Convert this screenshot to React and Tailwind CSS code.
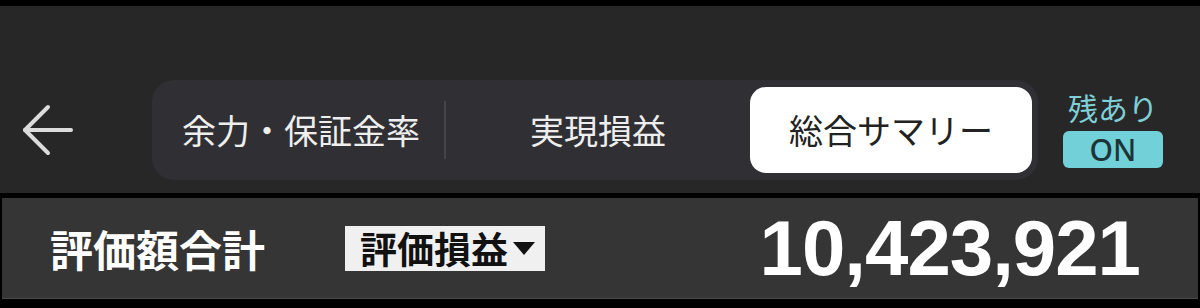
import React from "react";

const jp = { fontFamily: '"Noto Sans CJK JP", "Noto Sans", sans-serif' };
const num = { fontFamily: '"Liberation Sans", Arial, sans-serif' };

export default function App() {
  return (
    <div className="w-[1200px] h-[308px] bg-black pt-[6px] flex flex-col overflow-hidden" style={jp}>
      <div className="h-[187px] bg-[#272728] flex items-start pt-[74px] shrink-0">
        <div className="w-[152px] h-[100px] flex items-center pl-[22px]">
          <svg width="52" height="52" viewBox="0 0 52 52" fill="none" stroke="#dcdcdc" strokeWidth="4" strokeLinecap="round" strokeLinejoin="round">
            <path d="M3 26 H49" />
            <path d="M26 3 L3 26 L26 49" />
          </svg>
        </div>
        <div className="w-[886px] h-[100px] rounded-[22px] bg-[#303034] flex items-center pl-[6px] pr-[6px]">
          <div className="w-[286px] h-[86px] flex items-center justify-center text-[34px] text-[#eeeeee] pb-[2px]">
            余力・保証金率
          </div>
          <div className="w-[2px] h-[58px] bg-[#44444a]" />
          <div className="w-[304px] h-[86px] flex items-center justify-center text-[34px] text-[#eeeeee] pb-[2px]">
            実現損益
          </div>
          <div className="w-[282px] h-[86px] rounded-[16px] bg-white flex items-center justify-center text-[34px] text-[#222222] pb-[2px]">
            総合サマリー
          </div>
        </div>
        <div className="flex-1 flex flex-col items-center pt-[10px] pr-[12px]">
          <div className="text-[30px] leading-[34px] text-[#7fcfd6]">残あり</div>
          <div className="mt-[7px] w-[100px] h-[37px] rounded-[6px] bg-[#72d0d8] flex items-center justify-center text-[30px] font-medium text-[#1d3436] leading-none" style={{ fontFamily: '"Noto Sans", sans-serif' }}>
            ON
          </div>
        </div>
      </div>
      <div className="h-[5px] shrink-0" />
      <div className="h-[101px] mx-[2px] bg-[#353535] border-b border-[#4a4a4a] flex items-center shrink-0">
        <div className="ml-[48px] text-[43px] font-bold text-white leading-none">評価額合計</div>
        <div className="ml-[80px] h-[45px] pl-[15px] pr-[9px] bg-[#f0f0f0] flex items-center text-[37px] font-bold text-[#111111] leading-none">
          評価損益
          <svg width="24" height="16" viewBox="0 0 24 16" className="ml-[4px]">
            <path d="M1 2 H23 L12 15 Z" fill="#111111" />
          </svg>
        </div>
        <div className="flex-1 text-right pr-[58px] text-[78px] font-bold text-white leading-none tracking-[-1px]" style={num}>
          10,423,921
        </div>
      </div>
    </div>
  );
}
